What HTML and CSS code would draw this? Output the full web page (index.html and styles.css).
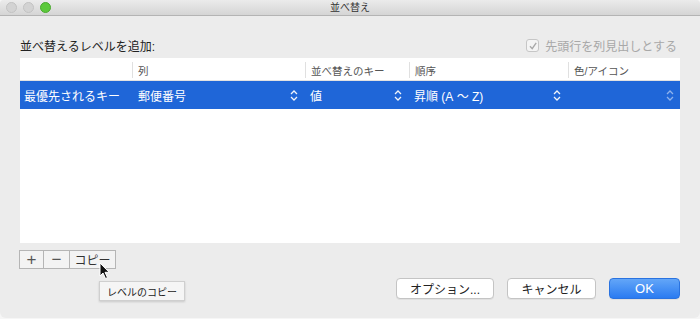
FILE: index.html
```html
<!DOCTYPE html>
<html lang="ja">
<head>
    <meta charset="UTF-8">
    <title>並べ替え</title>
    <link rel="stylesheet" href="styles.css">
</head>
<body>
    <div class="window">
        <div class="titlebar">
            <div class="lights">
                <span class="light"></span>
                <span class="light"></span>
                <span class="light green"></span>
            </div>
            <div class="title">並べ替え</div>
        </div>

        <div class="content">
            <div class="top-row">
                <div class="add-label">並べ替えるレベルを追加:</div>
                <label class="header-check">
                    <span class="checkbox">
                        <svg width="10" height="10" viewBox="0 0 10 10"><path d="M2 5.2 L4.2 7.6 L8.2 1.8" fill="none" stroke="#a9a9a9" stroke-width="1.4"/></svg>
                    </span>
                    先頭行を列見出しとする
                </label>
            </div>

            <div class="sort-table">
                <div class="row head">
                    <div class="cell c1"></div>
                    <div class="cell c2">列</div>
                    <div class="cell c3">並べ替えのキー</div>
                    <div class="cell c4">順序</div>
                    <div class="cell c5">色/アイコン</div>
                </div>
                <div class="row selected">
                    <div class="cell c1">最優先されるキー</div>
                    <div class="cell c2">郵便番号
                        <svg class="stepper" width="8" height="11" viewBox="0 0 8 11"><path d="M1 4 L4 1 L7 4 M1 7 L4 10 L7 7" fill="none" stroke="currentColor" stroke-width="1.3"/></svg>
                    </div>
                    <div class="cell c3">値
                        <svg class="stepper" width="8" height="11" viewBox="0 0 8 11"><path d="M1 4 L4 1 L7 4 M1 7 L4 10 L7 7" fill="none" stroke="currentColor" stroke-width="1.3"/></svg>
                    </div>
                    <div class="cell c4">昇順 (A&nbsp;〜&nbsp;Z)
                        <svg class="stepper" width="8" height="11" viewBox="0 0 8 11"><path d="M1 4 L4 1 L7 4 M1 7 L4 10 L7 7" fill="none" stroke="currentColor" stroke-width="1.3"/></svg>
                    </div>
                    <div class="cell c5 end">
                        <svg class="stepper dim" width="8" height="11" viewBox="0 0 8 11"><path d="M1 4 L4 1 L7 4 M1 7 L4 10 L7 7" fill="none" stroke="currentColor" stroke-width="1.3"/></svg>
                    </div>
                </div>
            </div>

            <div class="segmented">
                <span class="seg plus">+</span>
                <span class="seg minus">−</span>
                <span class="seg copy">コピー</span>
            </div>

            <div class="actions">
                <button class="btn">オプション...</button>
                <button class="btn">キャンセル</button>
                <button class="btn primary">OK</button>
            </div>

            <svg class="cursor" width="12" height="18" viewBox="0 0 12 18">
                <path d="M1 1 L1 14 L4 11 L6.5 16.5 L8.5 15.6 L6 10.3 L10.2 10.3 Z" fill="#111" stroke="#fff" stroke-width="1"/>
            </svg>
            <div class="tooltip">レベルのコピー</div>
        </div>
    </div>
</body>
</html>
```

FILE: styles.css
```css
* {
    margin: 0;
    padding: 0;
    box-sizing: border-box;
}

body {
    font-family: 'Liberation Sans', 'Noto Sans CJK JP', sans-serif;
    background: #f6f6f6;
    color: #222;
    width: 700px;
    height: 319px;
    overflow: hidden;
}

.window {
    width: 700px;
    height: 318px;
    background: #ececec;
    border-radius: 4px 4px 6px 6px;
    overflow: hidden;
    display: flex;
    flex-direction: column;
}

.titlebar {
    height: 16px;
    background: linear-gradient(#ebebeb, #d5d5d5);
    border-bottom: 1px solid #b4b4b4;
    display: flex;
    align-items: center;
    justify-content: center;
    position: relative;
}

.lights {
    position: absolute;
    left: 6px;
    top: 2px;
    display: flex;
    gap: 6px;
}

.light {
    width: 11px;
    height: 11px;
    border-radius: 50%;
    background: #d3d3d3;
    border: 1px solid #c2c2c2;
}

.light.green {
    background: #5cc93b;
    border-color: #4aa82f;
}

.title {
    font-size: 10px;
    color: #333;
    line-height: 14px;
}

.content {
    position: relative;
    flex: 1;
    padding: 0 20px;
}

.top-row {
    display: flex;
    justify-content: space-between;
    align-items: center;
    height: 19px;
    margin-top: 20px;
    padding-right: 3px;
}

.add-label {
    font-size: 12px;
    color: #222;
}

.header-check {
    display: flex;
    align-items: center;
    gap: 6px;
    font-size: 12px;
    color: #a8a8a8;
}

.checkbox {
    width: 13px;
    height: 13px;
    border: 1px solid #c6c6c6;
    border-radius: 3px;
    background: #f4f4f4;
    display: flex;
    align-items: center;
    justify-content: center;
}

.sort-table {
    margin-top: 3px;
    width: 660px;
    height: 185px;
    background: #fff;
}

.row {
    display: flex;
}

.cell {
    display: flex;
    align-items: center;
    justify-content: space-between;
    padding: 0 5px;
}

.c1 { width: 112px; padding-left: 4px; }
.c2 { width: 173px; }
.c3 { width: 104px; }
.c4 { width: 159px; }
.c5 { width: 112px; }
.cell.end { justify-content: flex-end; }

.row.head {
    height: 23px;
    border-bottom: 1px solid #e2e2e2;
    font-size: 10.5px;
    color: #555;
}

.row.head .cell {
    height: 16px;
    margin-top: 4px;
}

.row.head .cell + .cell {
    border-left: 1px solid #e0e0e0;
}

.row.selected {
    height: 28px;
    background: #1f66d8;
    color: #fff;
    font-size: 12px;
}

.row.selected .c2 {
    padding-left: 6px;
}

.stepper {
    color: #f0f4fb;
    margin-right: 2px;
}

.stepper.dim {
    color: #8fb2ec;
    margin-right: 1px;
}

.segmented {
    display: flex;
    width: 97px;
    height: 19px;
    margin-top: 7px;
    margin-left: -1px;
    border: 1px solid #b5b5b5;
    background: #f3f3f3;
}

.seg {
    display: flex;
    align-items: center;
    justify-content: center;
    color: #555;
}

.seg + .seg {
    border-left: 1px solid #b5b5b5;
}

.plus { width: 23px; font-size: 17px; font-weight: 300; }
.minus { width: 26px; font-size: 17px; font-weight: 300; }
.copy { flex: 1; font-size: 12px; color: #333; }

.actions {
    display: flex;
    justify-content: flex-end;
    gap: 13px;
    margin-top: 9px;
}

.btn {
    font-family: 'Liberation Sans', 'Noto Sans CJK JP', sans-serif;
    height: 21px;
    font-size: 12px;
    color: #222;
    background: #fff;
    border: 1px solid #c4c4c4;
    border-radius: 4px;
    box-shadow: 0 1px 0 rgba(0, 0, 0, 0.05);
}

.btn:nth-child(1) { width: 98px; }
.btn:nth-child(2) { width: 89px; }

.btn.primary {
    width: 71px;
    color: #fff;
    font-size: 13px;
    background: linear-gradient(#63a6f8, #2a7bf1);
    border-color: #2a73e0;
}

.cursor {
    position: absolute;
    left: 99px;
    top: 246px;
}

.tooltip {
    position: absolute;
    left: 99px;
    top: 265px;
    width: 86px;
    height: 20px;
    background: #f5f5f5;
    border: 1px solid #cfcfcf;
    box-shadow: 0 1px 2px rgba(0, 0, 0, 0.15);
    font-size: 10px;
    color: #222;
    display: flex;
    align-items: center;
    justify-content: center;
}
```
